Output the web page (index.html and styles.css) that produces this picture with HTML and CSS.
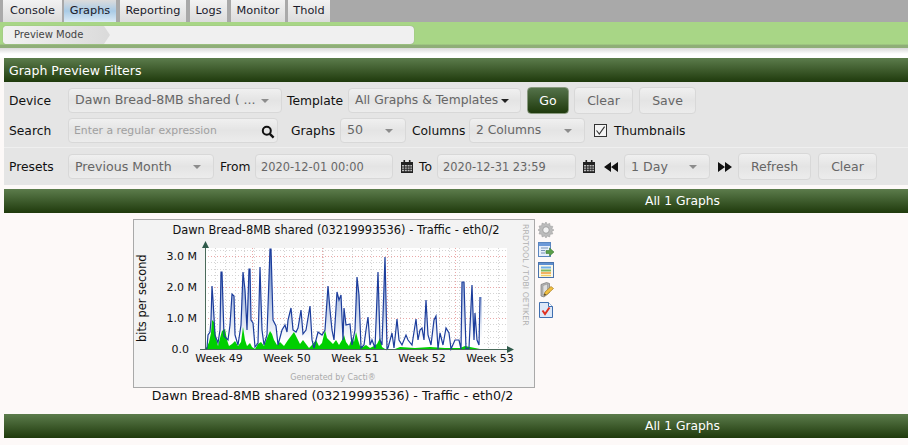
FILE: index.html
```html
<!DOCTYPE html>
<html lang="en">
<head>
    <meta charset="UTF-8">
    <title>Graph Preview</title>
    <link rel="stylesheet" href="styles.css">
</head>
<body>
    <div class="tabs">
        <a class="tab w-console">Console</a>
        <a class="tab tab-active w-graphs">Graphs</a>
        <a class="tab w-reporting">Reporting</a>
        <a class="tab w-logs">Logs</a>
        <a class="tab w-monitor">Monitor</a>
        <a class="tab w-thold">Thold</a>
    </div>
    <div class="navbar">
        <div class="crumbs"><span class="crumb">Preview Mode</span></div>
    </div>
    <div class="fade"></div>

    <div class="panel">
        <div class="panel-title">Graph Preview Filters</div>
        <div class="panel-body">
            <div class="row row-1">
                <label class="lbl w-first">Device</label>
                <div class="field f-device"><span>Dawn Bread-8MB shared ( ...</span><i class="caret"></i></div>
                <label class="lbl l-template">Template</label>
                <div class="field f-template"><span>All Graphs &amp; Templates</span><i class="caret caret-dark"></i></div>
                <button class="btn btn-go">Go</button>
                <button class="btn b-clear">Clear</button>
                <button class="btn b-save">Save</button>
            </div>
            <div class="row row-2">
                <label class="lbl w-first">Search</label>
                <div class="field f-search">
                    <span class="hint">Enter a regular expression</span>
                    <svg class="mag" width="14" height="14" viewBox="0 0 14 14"><circle cx="5.8" cy="5.8" r="4" fill="none" stroke="#111" stroke-width="2"/><path d="M8.8 8.8L12.6 12.6" stroke="#111" stroke-width="2.4"/></svg>
                </div>
                <label class="lbl l-graphs">Graphs</label>
                <div class="field f-graphs"><span>50</span><i class="caret"></i></div>
                <label class="lbl l-columns">Columns</label>
                <div class="field f-columns"><span>2 Columns</span><i class="caret"></i></div>
                <div class="check"><svg width="11" height="11" viewBox="0 0 11 11"><path d="M1.5 5.5L4.3 9L9.6 1.6" fill="none" stroke="#333" stroke-width="1.1"/></svg></div>
                <label class="lbl thumbs">Thumbnails</label>
            </div>
            <div class="row row-3">
                <label class="lbl w-first">Presets</label>
                <div class="field f-presets"><span>Previous Month</span><i class="caret"></i></div>
                <label class="lbl l-from">From</label>
                <div class="field f-date f-from"><span>2020-12-01 00:00</span></div>
                <svg class="cal cal-from" width="12" height="13" viewBox="0 0 12 13"><path d="M0 2h12v11H0z" fill="#222"/><path d="M2.5 0h1.6v3H2.5zM7.9 0h1.6v3H7.9z" fill="#222"/><path d="M1 5h2v1.4H1zM3.8 5h2v1.4h-2zM6.6 5h2v1.4h-2zM9.3 5H11v1.4H9.3zM1 7.4h2v1.4H1zM3.8 7.4h2v1.4h-2zM6.6 7.4h2v1.4h-2zM9.3 7.4H11v1.4H9.3zM1 9.8h2v1.4H1zM3.8 9.8h2v1.4h-2zM6.6 9.8h2v1.4h-2zM9.3 9.8H11v1.4H9.3z" fill="#bdbdbd"/></svg>
                <label class="lbl l-to">To</label>
                <div class="field f-date f-to"><span>2020-12-31 23:59</span></div>
                <svg class="cal cal-to" width="12" height="13" viewBox="0 0 12 13"><path d="M0 2h12v11H0z" fill="#222"/><path d="M2.5 0h1.6v3H2.5zM7.9 0h1.6v3H7.9z" fill="#222"/><path d="M1 5h2v1.4H1zM3.8 5h2v1.4h-2zM6.6 5h2v1.4h-2zM9.3 5H11v1.4H9.3zM1 7.4h2v1.4H1zM3.8 7.4h2v1.4h-2zM6.6 7.4h2v1.4h-2zM9.3 7.4H11v1.4H9.3zM1 9.8h2v1.4H1zM3.8 9.8h2v1.4h-2zM6.6 9.8h2v1.4h-2zM9.3 9.8H11v1.4H9.3z" fill="#bdbdbd"/></svg>
                <svg class="shift-l" width="14" height="10" viewBox="0 0 14 10"><path d="M7 0v10L0 5zM14 0v10L7 5z" fill="#111"/></svg>
                <div class="field f-span"><span>1 Day</span><i class="caret"></i></div>
                <svg class="shift-r" width="14" height="10" viewBox="0 0 14 10"><path d="M0 0v10l7-5zM7 0v10l7-5z" fill="#111"/></svg>
                <button class="btn b-refresh">Refresh</button>
                <button class="btn b-clear2">Clear</button>
            </div>
        </div>
    </div>

    <div class="bar">All 1 Graphs</div>

    <div class="graphs">
        <div class="graph-cell">
            <svg class="chart" width="402" height="169" viewBox="133 219 402 169">
                <defs>
                    <linearGradient id="inbound" gradientUnits="userSpaceOnUse" x1="0" y1="250" x2="0" y2="340">
                        <stop offset="0" stop-color="#5a7cc0"/>
                        <stop offset="1" stop-color="#ffffff"/>
                    </linearGradient>
                </defs>
                <rect x="133.5" y="219.5" width="401" height="168" fill="#f3f3f3" stroke="#a9a9a9"/>
                <rect x="205" y="248" width="302" height="101" fill="#fff"/>
                <path class="grid-minor" d="M205 343.5H507M205 337.5H507M205 331.5H507M205 324.5H507M205 312.5H507M205 306.5H507M205 300.5H507M205 293.5H507M205 281.5H507M205 275.5H507M205 269.5H507M205 262.5H507M205 250.5H507"/>
                <path class="grid-minor" d="M215.5 248V349M225.5 248V349M235.5 248V349M244.5 248V349M254.5 248V349M264.5 248V349M284.5 248V349M293.5 248V349M303.5 248V349M313.5 248V349M323.5 248V349M332.5 248V349M352.5 248V349M362.5 248V349M371.5 248V349M381.5 248V349M391.5 248V349M400.5 248V349M420.5 248V349M430.5 248V349M439.5 248V349M449.5 248V349M459.5 248V349M488.5 248V349M498.5 248V349"/>
                <path class="grid-major" d="M205 318.5H507M205 287.5H507M205 256.5H507M252.5 248V349M322.5 248V349M387.5 248V349M455.5 248V349"/>
                <polygon fill="url(#inbound)" points="205,349 207,348 208,335 210,332 211,320 212,286 213,300 215,335 218,343 220,330 221,272 222,272 224,336 228,340 230,325 232,294 234,296 235,335 238,345 241,325 243,272 245,290 247,330 249,269 250,269 251,320 253,323 255,347 258,343 260,267 261,300 262,330 264,345 267,335 270,249 271,249 273,320 276,326 278,345 282,330 285,325 287,332 288,320 291,308 293,330 296,332 298,328 301,310 303,334 306,330 310,306 312,340 314,348 318,332 322,335 325,330 328,286 330,310 332,330 334,340 337,292 339,300 341,295 343,340 344,308 346,325 350,324 352,345 355,330 357,277 359,295 361,348 364,345 366,330 368,317 370,345 372,340 375,348 378,272 380,340 382,345 385,257 386,300 387,349 388,348 392,333 394,348 397,319 399,340 402,345 406,335 408,340 412,345 416,319 418,340 420,330 422,328 424,340 426,300 428,335 431,345 434,320 436,316 438,349 440,333 443,345 446,328 449,333 451,349 455,340 459,340 461,349 462,282 464,282 466,349 469,348 472,285 474,340 475,313 477,340 479,345 480,297 482,297 482,349"/>
                <polygon fill="#00cf00" points="205,349 207,347 209,342 211,333 212,320 214,322 216,338 218,346 220,338 222,331 225,329 227,340 229,346 232,344 235,341 238,346 241,342 243,327 245,340 247,346 250,343 252,347 255,349 258,344 261,342 264,346 267,338 270,331 272,334 274,340 277,345 280,342 284,346 288,340 291,336 294,332 297,338 300,344 303,340 306,344 309,348 312,345 316,340 319,346 322,343 325,330 327,338 330,341 333,344 336,340 339,345 342,340 344,335 346,342 349,346 352,338 354,342 356,332 358,340 360,346 363,347 366,345 370,348 374,346 377,344 380,338 382,347 385,349 395,349 400,347 415,348 430,347 445,348 460,348 465,346 470,347 480,349"/>
                <polyline fill="none" stroke="#1c3d9c" stroke-width="1.2" points="205,349 207,348 208,335 210,332 211,320 212,286 213,300 215,335 218,343 220,330 221,272 222,272 224,336 228,340 230,325 232,294 234,296 235,335 238,345 241,325 243,272 245,290 247,330 249,269 250,269 251,320 253,323 255,347 258,343 260,267 261,300 262,330 264,345 267,335 270,249 271,249 273,320 276,326 278,345 282,330 285,325 287,332 288,320 291,308 293,330 296,332 298,328 301,310 303,334 306,330 310,306 312,340 314,348 318,332 322,335 325,330 328,286 330,310 332,330 334,340 337,292 339,300 341,295 343,340 344,308 346,325 350,324 352,345 355,330 357,277 359,295 361,348 364,345 366,330 368,317 370,345 372,340 375,348 378,272 380,340 382,345 385,257 386,300 387,349 388,348 392,333 394,348 397,319 399,340 402,345 406,335 408,340 412,345 416,319 418,340 420,330 422,328 424,340 426,300 428,335 431,345 434,320 436,316 438,349 440,333 443,345 446,328 449,333 451,349 455,340 459,340 461,349 462,282 464,282 466,349 469,348 472,285 474,340 475,313 477,340 479,345 480,297"/>
                <path d="M205.5 349V244M200 349.5H509" stroke="#4a6a5a" fill="none"/>
                <path d="M202 248L205.500 241L209 248zM507 346L514 349.500L507 353z" fill="#2f5a4a"/>
                <text class="c-title" x="336" y="234" text-anchor="middle">Dawn Bread-8MB shared (03219993536) - Traffic - eth0/2</text>
                <text class="c-axis" x="197" y="260" text-anchor="end">3.0 M</text>
                <text class="c-axis" x="197" y="291" text-anchor="end">2.0 M</text>
                <text class="c-axis" x="197" y="322" text-anchor="end">1.0 M</text>
                <text class="c-axis" x="189" y="353" text-anchor="end">0.0</text>
                <text class="c-axis c-vert" transform="translate(146 342) rotate(-90)">bits per second</text>
                <text class="c-axis" x="219" y="362" text-anchor="middle">Week 49</text>
                <text class="c-axis" x="287" y="362" text-anchor="middle">Week 50</text>
                <text class="c-axis" x="355" y="362" text-anchor="middle">Week 51</text>
                <text class="c-axis" x="422" y="362" text-anchor="middle">Week 52</text>
                <text class="c-axis" x="490" y="362" text-anchor="middle">Week 53</text>
                <text class="c-foot" x="333" y="380" text-anchor="middle">Generated by Cacti®</text>
                <text class="c-side" transform="translate(523 224) rotate(90)">RRDTOOL / TOBI OETIKER</text>
            </svg>
            <div class="actions">
                <svg class="act-gear" width="18" height="18" viewBox="0 0 18 18"><path d="M9 1l1.200 2.400 2.500-1 .4 2.700 2.700.3-1 2.500L17 9l-2.200 1.400 1 2.500-2.700.3-.4 2.700-2.500-1L9 17l-1.400-2.100-2.500 1-.4-2.700-2.700-.3 1-2.500L1 9l2-1.400-1-2.500 2.700-.3.400-2.700 2.500 1z" fill="#bcbcbc" stroke="#a0a0a0" stroke-width=".6"/><circle cx="9" cy="9" r="3.300" fill="#f1f1f1" stroke="#a0a0a0"/></svg>
                <svg width="16" height="16" viewBox="0 0 16 16"><rect x=".5" y=".5" width="12" height="14" fill="#e8f0fb" stroke="#5a86c0"/><rect x="1" y="1" width="11" height="3" fill="#6d9ad8"/><path d="M3 6h7M3 8.500h4M3 11h4" stroke="#7a93b8"/><path d="M8 8.500h3.500V6l4.500 4-4.500 4v-2.500H8z" fill="#5aa04a" stroke="#3f7a36" stroke-width=".6"/></svg>
                <svg width="16" height="16" viewBox="0 0 16 16"><rect x=".5" y=".5" width="15" height="15" fill="#fbf8e8" stroke="#4a74ad"/><rect x="1" y="1" width="14" height="2" fill="#5f8fd0"/><path d="M3 5.500h10" stroke="#6fb0e8" stroke-width="2"/><path d="M3 8.500h10" stroke="#7cb860" stroke-width="2"/><path d="M3 11h10" stroke="#f0a040" stroke-width="1.600"/><path d="M3 13.500h10" stroke="#f2d060" stroke-width="1.400"/></svg>
                <svg width="16" height="16" viewBox="0 0 16 16"><path d="M3 2.500L8.500.5l3 1v9L6 15l-3-1z" fill="#b5b5b5" stroke="#777" stroke-width=".7"/><path d="M5 3.500L9.500 2v8.500L5 13z" fill="#dedede" stroke="#888" stroke-width=".5"/><path d="M6 13.500l1-3.500L13 4.500l2.500 2L9 12.500z" fill="#f2c040" stroke="#a57a20" stroke-width=".7"/><path d="M6 13.500l.6-2 1.400 1z" fill="#333"/></svg>
                <svg class="act-report" width="14" height="16" viewBox="0 0 14 16"><path d="M.5.500h9l4 4v11H.5z" fill="#dce8f8" stroke="#3f6fb0"/><path d="M9.500.500v4h4" fill="#fff" stroke="#3f6fb0"/><path d="M3.500 8.500l2.500 3.500 4.500-6.500" fill="none" stroke="#e03020" stroke-width="2"/></svg>
            </div>
            <div class="caption">Dawn Bread-8MB shared (03219993536) - Traffic - eth0/2</div>
        </div>
    </div>

    <div class="bar">All 1 Graphs</div>
</body>
</html>
```

FILE: styles.css
```css
html, body {
    margin: 0;
    padding: 0;
}
body {
    background: #fdf9f8;
    font-family: 'DejaVu Sans', Verdana, sans-serif;
    font-size: 12px;
    color: #111;
    overflow: hidden;
}

/* top tabs */
.tabs {
    display: flex;
    height: 22px;
    padding-left: 3px;
    background: #a9a9a9;
}
.tab {
    box-sizing: border-box;
    height: 22px;
    margin-right: 4px;
    line-height: 21px;
    text-align: center;
    font-size: 11.3px;
    color: #1a1a2a;
    background: linear-gradient(#f2f2f2, #dcdcdc);
}
.tab-active {
    background: linear-gradient(#dcdcdc, #a9cbe6 50%, #dceaf5);
}
.w-console { width: 59px; margin-right: 2px; }
.w-graphs { width: 52px; }
.w-reporting { width: 66px; }
.w-logs { width: 37px; }
.w-monitor { width: 54px; margin-right: 3px; }
.w-thold { width: 42px; }

/* breadcrumb band */
.navbar {
    box-sizing: border-box;
    height: 26px;
    padding: 4px 0 0 3px;
    background: linear-gradient(#a8d686 0, #a8d686 84%, #8fae78 90%, #8fae78 100%);
}
.crumbs {
    width: 411px;
    height: 18px;
    background: #f0f0f0;
    border-radius: 4px;
    box-shadow: 0 0 1px #888;
    overflow: hidden;
}
.crumb {
    display: block;
    width: 107px;
    height: 18px;
    padding-left: 11px;
    box-sizing: border-box;
    line-height: 18px;
    font-size: 10px;
    color: #444;
    background: linear-gradient(90deg, #f2f2f2, #dadada);
    clip-path: polygon(0 0, 101px 0, 107px 50%, 101px 100%, 0 100%);
}
.fade {
    height: 10px;
    background: linear-gradient(#d8d8d8, #fff 60%);
}

/* filter panel */
.panel {
    margin-left: 4px;
    background: #e5e5e5;
}
.panel-title, .bar {
    height: 24px;
    line-height: 25px;
    color: #fff;
    font-size: 12.5px;
    background: linear-gradient(#5c7c4c, #1f3a0c);
}
.panel-title {
    padding-left: 5px;
}
.panel-body {
    height: 103px;
    padding-top: 6px;
    box-sizing: border-box;
}
.row {
    display: flex;
    align-items: center;
    height: 25px;
    padding-left: 5px;
}
.row-2 {
    margin-top: 5px;
}
.row-3 {
    margin-top: 11px;
    position: relative;
}
.row-3::before {
    content: "";
    position: absolute;
    left: 0;
    right: 0;
    top: -7px;
    border-top: 1px solid #efefef;
}
.lbl {
    font-size: 12.3px;
    white-space: nowrap;
}
.row-3 .lbl {
    padding-top: 1px;
}
.w-first { width: 59px; }
.l-template { width: 56px; margin-left: 5px; margin-right: 5px; }
.l-graphs { width: 49px; margin-left: 13px; }
.l-columns { width: 57px; margin-left: 6px; }
.l-from { width: 35px; margin-left: 6px; }
.l-to { width: 18px; margin-left: 6px; }

.field {
    box-sizing: border-box;
    position: relative;
    height: 25px;
    padding-left: 6px;
    line-height: 22px;
    font-size: 12.6px;
    color: #666;
    white-space: nowrap;
    border: 1px solid #d8d8d8;
    border-radius: 4px;
    background: linear-gradient(#f0f0f0, #e4e4e4 50%, #ececec);
}
.row-3 .field {
    line-height: 23px;
}
.caret {
    position: absolute;
    right: 12px;
    top: 10px;
    border: 4px solid transparent;
    border-top: 4px solid #8c8c8c;
    border-bottom: 0;
}
.caret-dark {
    right: 11px;
    border-top-color: #222;
}
.f-device { width: 214px; }
.f-template { width: 173px; font-size: 12.3px; }
.f-search { width: 210px; padding-left: 5px; }
.f-graphs { width: 66px; }
.f-columns { width: 116px; font-size: 12.3px; }
.f-presets { width: 146px; }
.f-from { width: 138px; }
.f-to { width: 139px; }
.f-span { width: 86px; margin-left: 6px; }
.f-date {
    padding-left: 5px;
    font-size: 11.4px;
}
.row-3 .f-date {
    line-height: 25px;
}
.hint {
    font-size: 10.8px;
    color: #a0a0a0;
}
.mag {
    position: absolute;
    right: 2px;
    top: 6px;
}
.check {
    box-sizing: border-box;
    width: 13px;
    height: 13px;
    margin-left: 9px;
    border: 1px solid #333;
    background: #f4f4f4;
}
.check svg {
    display: block;
}
.thumbs {
    margin-left: 7px;
}
.cal-from { margin-left: 8px; }
.cal-to { margin-left: 7px; }
.shift-l { margin-left: 9px; }
.shift-r { margin-left: 8px; }

.btn {
    box-sizing: border-box;
    height: 27px;
    padding: 0;
    font-family: inherit;
    font-size: 12.5px;
    color: #666;
    border: 1px solid #d8d8d8;
    border-radius: 4px;
    background: linear-gradient(#f0f0f0, #e4e4e4 50%, #ececec);
}
.btn-go {
    width: 42px;
    margin-left: 6px;
    color: #fff;
    border-color: #8a9a80;
    background: linear-gradient(#54724a, #1f3a0c);
}
.b-clear { width: 59px; margin-left: 5px; }
.b-save { width: 57px; margin-left: 6px; }
.b-refresh { width: 73px; margin-left: 6px; }
.b-clear2 { width: 59px; margin-left: 7px; }

.bar {
    margin: 4px 0 0 4px;
    padding-left: 641px;
    font-size: 12.3px;
}

/* graph area */
.graphs {
    height: 197px;
}
.graph-cell {
    display: grid;
    grid-template-columns: 402px 24px;
    width: 426px;
    margin-left: 133px;
    padding-top: 6px;
}
.chart {
    display: block;
}
.actions {
    display: flex;
    flex-direction: column;
    align-items: flex-start;
    gap: 4px;
    padding: 3px 0 0 3px;
}
.actions svg {
    display: block;
}
.act-gear {
    margin: -1px 0 -1px -1px;
}
.act-report {
    margin-left: 1px;
}
.caption {
    grid-column: 1;
    padding-right: 3px;
    text-align: center;
    font-size: 12.6px;
    line-height: 16px;
}
.grid-minor {
    stroke: #d4d4d4;
    stroke-dasharray: 1 2;
    fill: none;
}
.grid-major {
    stroke: #eaa8a8;
    stroke-dasharray: 1 2;
    fill: none;
}
.c-title {
    font-size: 11.4px;
    fill: #111;
}
.c-axis {
    font-size: 11px;
    fill: #111;
}
.c-vert {
    font-size: 11.4px;
}
.c-foot {
    font-size: 8px;
    fill: #aaa;
}
.c-side {
    font-size: 7.9px;
    fill: #b0b0b0;
}
```
